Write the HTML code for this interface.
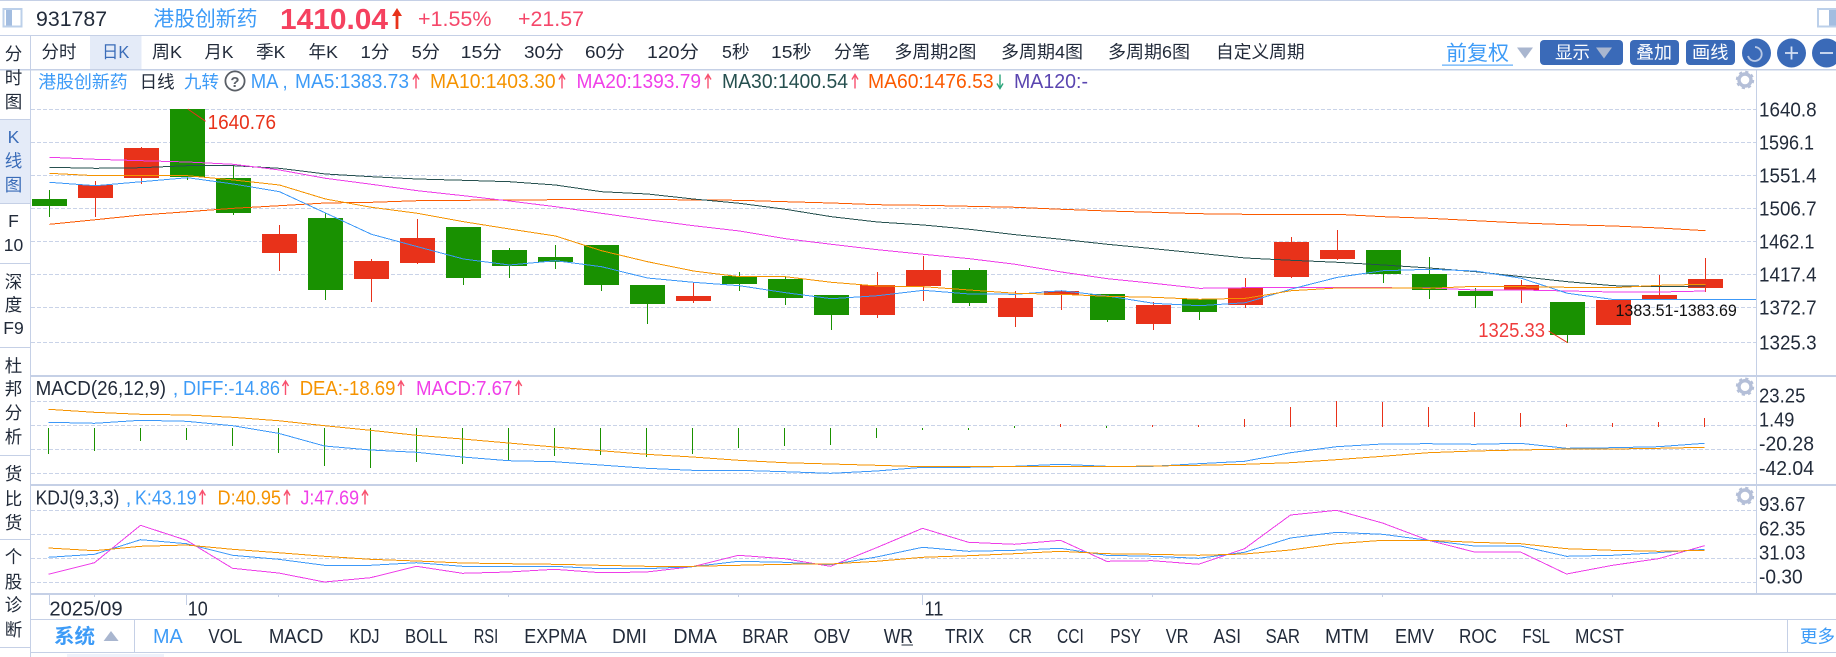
<!DOCTYPE html>
<html lang="zh"><head><meta charset="utf-8"><title>931787</title>
<style>
html,body{margin:0;padding:0;background:#fff;width:1836px;height:657px;overflow:hidden}
svg{display:block;position:absolute;left:0;top:0}
text{font-family:"Liberation Sans","Noto Sans CJK SC",sans-serif;font-size:20px;fill:#222b3a;white-space:pre}
.t{font-size:17.5px}
.s{font-size:17.5px;text-anchor:middle}
.bl{fill:#3d9bf7}.or{fill:#f59300}.mg{fill:#f03fe8}
.ln{fill:none;stroke-width:1;shape-rendering:crispEdges}
.fr{shape-rendering:crispEdges}
</style></head><body>
<svg width="1836" height="657" viewBox="0 0 1836 657" xmlns="http://www.w3.org/2000/svg">
<rect width="1836" height="657" fill="#fff"/>
<!-- structural -->
<rect x="90" y="36" width="51.5" height="33" fill="#e4ebf8"/>
<rect x="0" y="119" width="30" height="84" fill="#e4ebf8"/>
<g fill="#c5d0e6" class="fr">
<rect x="0" y="0" width="1836" height="1"/>
<rect x="0" y="35" width="1836" height="1"/>
<rect x="0" y="69" width="1836" height="1.5"/>
<rect x="30" y="36" width="1" height="621"/>
<rect x="1756" y="70" width="1" height="525"/>
<rect x="31" y="375" width="1805" height="2"/>
<rect x="31" y="484" width="1805" height="2"/>
<rect x="31" y="593" width="1805" height="2"/>
<rect x="31" y="619" width="1805" height="1"/>
<rect x="31" y="652" width="1805" height="1"/>
<rect x="134" y="620" width="1" height="32"/>
<rect x="1787" y="620" width="1" height="32"/>
<rect x="0" y="119" width="30" height="1"/><rect x="0" y="203" width="30" height="1"/>
<rect x="0" y="263" width="30" height="1"/><rect x="0" y="347" width="30" height="1"/>
<rect x="0" y="455" width="30" height="1"/><rect x="0" y="539" width="30" height="1"/>
<rect x="0" y="647" width="30" height="1"/>
<rect x="49" y="595" width="1" height="10"/><rect x="186" y="595" width="1" height="10"/><rect x="922" y="595" width="1" height="10"/>
<rect x="94" y="595" width="1" height="2"/><rect x="278" y="595" width="1" height="2"/><rect x="508" y="595" width="1" height="2"/><rect x="738" y="595" width="1" height="2"/><rect x="1152" y="595" width="1" height="2"/><rect x="1382" y="595" width="1" height="2"/><rect x="1612" y="595" width="1" height="2"/>
</g>
<rect x="67" y="654" width="97" height="3" fill="#eef2fb"/>
<!-- grid -->
<path class="fr" fill="none" stroke="#c9d3e8" stroke-width="1" stroke-dasharray="4 2" d="M31 109.5H1756M31 142.5H1756M31 175.5H1756M31 208.5H1756M31 241.5H1756M31 274.5H1756M31 307.5H1756M31 342.5H1756M31 401.5H1756M31 425.5H1756M31 449.5H1756M31 473.5H1756M31 510.5H1756M31 534.5H1756M31 558.5H1756M31 582.5H1756"/>
<!-- header -->
<rect x="3.5" y="9" width="18" height="17.5" fill="#fff" stroke="#bcd0ea" stroke-width="2"/>
<rect x="6" y="10" width="6" height="15.5" fill="#a3bde0"/>
<rect x="1818" y="9" width="20" height="17.5" fill="#fff" stroke="#bcd0ea" stroke-width="2"/>
<rect x="1829" y="10" width="7" height="15.5" fill="#a3bde0"/>
<text x="36" y="26" style="font-size:21.3px">931787</text>
<text x="153.4" y="26" textLength="104" lengthAdjust="spacingAndGlyphs" class="bl" style="font-size:20.8px">港股创新药</text>
<text x="280" y="29" textLength="108" lengthAdjust="spacingAndGlyphs" style="font-size:29px;font-weight:bold;fill:#f5415f">1410.04</text>
<path d="M395.6 29V16H392L397 8L402 16H398.4V29Z" fill="#e8321a"/>
<text x="418" y="26" textLength="73.5" lengthAdjust="spacingAndGlyphs" style="font-size:21.3px;fill:#f5476a">+1.55%</text>
<text x="518" y="26" textLength="66" lengthAdjust="spacingAndGlyphs" style="font-size:21.3px;fill:#f5476a">+21.57</text>
<!-- toolbar -->
<g class="t">
<text class="t" x="41.5" y="58" textLength="35" lengthAdjust="spacingAndGlyphs">分时</text>
<text class="t" x="102" y="58" textLength="27.3" lengthAdjust="spacingAndGlyphs" style="fill:#3a6cb8">日K</text>
<text class="t" x="152" y="58" textLength="30" lengthAdjust="spacingAndGlyphs">周K</text>
<text class="t" x="204.5" y="58" textLength="29" lengthAdjust="spacingAndGlyphs">月K</text>
<text class="t" x="256" y="58" textLength="29.4" lengthAdjust="spacingAndGlyphs">季K</text>
<text class="t" x="308.5" y="58" textLength="29.5" lengthAdjust="spacingAndGlyphs">年K</text>
<text class="t" x="360.5" y="58" textLength="29" lengthAdjust="spacingAndGlyphs">1分</text>
<text class="t" x="411.6" y="58" textLength="28.4" lengthAdjust="spacingAndGlyphs">5分</text>
<text class="t" x="460.6" y="58" textLength="41.4" lengthAdjust="spacingAndGlyphs">15分</text>
<text class="t" x="524" y="58" textLength="40" lengthAdjust="spacingAndGlyphs">30分</text>
<text class="t" x="585" y="58" textLength="40" lengthAdjust="spacingAndGlyphs">60分</text>
<text class="t" x="647" y="58" textLength="52" lengthAdjust="spacingAndGlyphs">120分</text>
<text class="t" x="722" y="58" textLength="27.6" lengthAdjust="spacingAndGlyphs">5秒</text>
<text class="t" x="771" y="58" textLength="40.7" lengthAdjust="spacingAndGlyphs">15秒</text>
<text class="t" x="834" y="58" textLength="36" lengthAdjust="spacingAndGlyphs">分笔</text>
<text class="t" x="894.4" y="58" textLength="82" lengthAdjust="spacingAndGlyphs">多周期2图</text>
<text class="t" x="1001" y="58" textLength="82" lengthAdjust="spacingAndGlyphs">多周期4图</text>
<text class="t" x="1108" y="58" textLength="82" lengthAdjust="spacingAndGlyphs">多周期6图</text>
<text class="t" x="1216" y="58" textLength="88.6" lengthAdjust="spacingAndGlyphs">自定义周期</text>
</g>
<text x="1446" y="60" textLength="63" lengthAdjust="spacingAndGlyphs" class="bl" style="font-size:20.5px">前复权</text>
<rect x="1442" y="64.6" width="71" height="1" fill="#3d9bf7"/>
<path d="M1517 47.5H1533L1525 58.5Z" fill="#a9b6cf"/>
<rect x="1540" y="40" width="83" height="25" rx="4" fill="#3a6ab8"/>
<text class="t" x="1555" y="58.5" textLength="35" lengthAdjust="spacingAndGlyphs" style="fill:#fff">显示</text>
<path d="M1596 47.5H1612L1604 58.5Z" fill="#a9b6cf"/>
<rect x="1630" y="40" width="49" height="25" rx="4" fill="#3a6ab8"/>
<text class="t" x="1636" y="58.5" textLength="36" lengthAdjust="spacingAndGlyphs" style="fill:#fff">叠加</text>
<rect x="1686" y="40" width="49" height="25" rx="4" fill="#3a6ab8"/>
<text class="t" x="1692" y="58.5" textLength="36.4" lengthAdjust="spacingAndGlyphs" style="fill:#fff">画线</text>
<circle cx="1756.5" cy="53" r="14.5" fill="#3a6ab8"/>
<path d="M1755 47A7 7 0 1 1 1748 56" fill="none" stroke="#b9c9e6" stroke-width="1.8"/>
<circle cx="1791.5" cy="53" r="14.5" fill="#3a6ab8"/>
<path d="M1785 53H1798M1791.5 46.5V59.5" fill="none" stroke="#d5e0f3" stroke-width="1.8"/>
<circle cx="1826.5" cy="53" r="14.5" fill="#3a6ab8"/>
<path d="M1820 53H1833" fill="none" stroke="#d5e0f3" stroke-width="1.8"/>
<!-- sidebar -->
<text class="s" x="13.5" y="60">分</text><text class="s" x="13.5" y="84">时</text><text class="s" x="13.5" y="108">图</text>
<g style="fill:#3a6cb8"><text class="s" x="13.5" y="143" style="fill:#3a6cb8">K</text><text class="s" x="13.5" y="167" style="fill:#3a6cb8">线</text><text class="s" x="13.5" y="191" style="fill:#3a6cb8">图</text></g>
<text class="s" x="13.5" y="227">F</text><text class="s" x="13.5" y="251">10</text>
<text class="s" x="13.5" y="288">深</text><text class="s" x="13.5" y="311">度</text><text class="s" x="13.5" y="334">F9</text>
<text class="s" x="13.5" y="372">杜</text><text class="s" x="13.5" y="395">邦</text><text class="s" x="13.5" y="419">分</text><text class="s" x="13.5" y="443">析</text>
<text class="s" x="13.5" y="480">货</text><text class="s" x="13.5" y="505">比</text><text class="s" x="13.5" y="529">货</text>
<text class="s" x="13.5" y="563">个</text><text class="s" x="13.5" y="588">股</text><text class="s" x="13.5" y="611">诊</text><text class="s" x="13.5" y="636">断</text>
<!-- candles -->
<path class="fr" fill="#199101" d="M32 199h35v7h-35zM49 190h1v27h-1zM170 109h35v68h-35zM187 177h1v3h-1zM216 178h35v35h-35zM233 164h1v51h-1zM308 218h35v72h-35zM325 213h1v87h-1zM446 227h35v51h-35zM463 278h1v7h-1zM492 250h35v16h-35zM509 248h1v30h-1zM538 257h35v5h-35zM555 245h1v24h-1zM584 245h35v40h-35zM601 285h1v6h-1zM630 285h35v19h-35zM647 304h1v20h-1zM722 276h35v8h-35zM739 272h1v19h-1zM768 279h35v19h-35zM785 277h1v28h-1zM814 295h35v20h-35zM831 315h1v15h-1zM952 270h35v33h-35zM969 268h1v38h-1zM1090 294h35v26h-35zM1107 320h1v2h-1zM1182 299h35v13h-35zM1199 312h1v8h-1zM1366 250h35v24h-35zM1383 274h1v9h-1zM1412 274h35v16h-35zM1429 257h1v42h-1zM1458 291h35v5h-35zM1475 288h1v20h-1zM1550 302h35v33h-35zM1567 335h1v8h-1z"/>
<path class="fr" fill="#e8321a" d="M78 185h35v13h-35zM95 181h1v36h-1zM124 148h35v30h-35zM141 147h1v37h-1zM262 234h35v19h-35zM279 225h1v46h-1zM354 261h35v18h-35zM371 259h1v43h-1zM400 238h35v25h-35zM417 219h1v45h-1zM676 296h35v5h-35zM693 282h1v21h-1zM860 285h35v30h-35zM877 272h1v46h-1zM906 270h35v16h-35zM923 256h1v45h-1zM998 298h35v19h-35zM1015 291h1v36h-1zM1044 291h35v4h-35zM1061 291h1v19h-1zM1136 305h35v19h-35zM1153 302h1v28h-1zM1228 288h35v17h-35zM1245 278h1v30h-1zM1274 242h35v35h-35zM1291 237h1v41h-1zM1320 250h35v9h-35zM1337 230h1v30h-1zM1504 285h35v5h-35zM1521 280h1v23h-1zM1596 300h35v25h-35zM1642 295h35v4h-35zM1659 275h1v24h-1zM1688 279h35v9h-35zM1705 258h1v34h-1z"/>
<!-- MA lines -->
<polyline class="ln" stroke="#fb5a00" points="49.5,224.3 95.5,219.7 141.5,215 187.5,211.7 233.5,208.3 279.5,205.7 325.5,203 371.5,202.3 417.5,200.7 463.5,200.3 509.5,200 555.5,199.7 601.5,199.3 647.5,199.3 693.5,200 739.5,200.3 785.5,201.7 831.5,203 877.5,204.7 923.5,205.3 969.5,206.3 1015.5,207.3 1061.5,209.3 1107.5,211 1153.5,212.3 1199.5,213.7 1245.5,214.3 1291.5,214.3 1337.5,214.3 1383.5,216.7 1429.5,218.3 1475.5,220.7 1521.5,223 1567.5,224.7 1613.5,226 1659.5,228 1705.5,230.7"/>
<polyline class="ln" stroke="#26504f" points="49.5,167.3 95.5,168.3 141.5,167.7 187.5,165.7 233.5,165.7 279.5,168.3 325.5,174 371.5,176.7 417.5,179 463.5,180.3 509.5,181.7 555.5,185 601.5,191.7 647.5,194 693.5,199 739.5,203.3 785.5,209.3 831.5,216.7 877.5,222 923.5,225 969.5,229.3 1015.5,234.7 1061.5,239.3 1107.5,244.3 1153.5,248.7 1199.5,253.3 1245.5,258 1291.5,260.3 1337.5,262.3 1383.5,265 1429.5,268 1475.5,271.7 1521.5,276.7 1567.5,281.7 1613.5,285.7 1659.5,286.7 1705.5,286"/>
<polyline class="ln" stroke="#ee3de8" points="49.5,157.3 95.5,159.3 141.5,160.7 187.5,162 233.5,164.3 279.5,170 325.5,178.3 371.5,184.3 417.5,190.7 463.5,195.7 509.5,201 555.5,206.7 601.5,213.3 647.5,219.7 693.5,225.7 739.5,231 785.5,238.7 831.5,244.3 877.5,249.7 923.5,254.3 969.5,258.7 1015.5,264.3 1061.5,272 1107.5,278.7 1153.5,283.3 1199.5,288.3 1245.5,287.7 1291.5,287.7 1337.5,287.7 1383.5,287.7 1429.5,288 1475.5,290 1521.5,290 1567.5,291 1613.5,292 1659.5,292 1705.5,291"/>
<polyline class="ln" stroke="#3c98f8" points="49.5,182.3 95.5,185.7 141.5,181.7 187.5,177.7 233.5,184 279.5,191.7 325.5,213 371.5,234.3 417.5,246.7 463.5,259 509.5,265 555.5,260.7 601.5,266.7 647.5,278 693.5,282.3 739.5,285.7 785.5,292.7 831.5,298.7 877.5,295.7 923.5,290.3 969.5,294 1015.5,294.3 1061.5,290.7 1107.5,296 1153.5,303.3 1199.5,305.7 1245.5,302.7 1291.5,289 1337.5,277.3 1383.5,270.7 1429.5,269.3 1475.5,271 1521.5,278.3 1567.5,293.3 1613.5,299.5 1756,299.5"/>
<polyline class="ln" stroke="#f59300" points="49.5,173.3 95.5,175.7 141.5,175.7 187.5,175.7 233.5,180 279.5,185 325.5,199 371.5,207.3 417.5,213.3 463.5,221.7 509.5,229 555.5,236 601.5,250.7 647.5,261.7 693.5,271 739.5,276.7 785.5,276.7 831.5,282.3 877.5,286 923.5,286.7 969.5,290 1015.5,293.3 1061.5,294.3 1107.5,296.3 1153.5,297.3 1199.5,299.3 1245.5,298.3 1291.5,290.7 1337.5,288 1383.5,288 1429.5,288.3 1475.5,286.3 1521.5,286.7 1567.5,287.3 1613.5,287.7 1659.5,285.3 1705.5,284.3"/>
<!-- extremes -->
<path d="M187.8 109L205.6 121.3M1548.6 331L1567.6 342.7" fill="none" stroke="#e8321a" stroke-width="1"/>
<text x="207.6" y="129" textLength="68.4" lengthAdjust="spacingAndGlyphs" style="fill:#e8321a">1640.76</text>
<text x="1478.3" y="337" textLength="66.7" lengthAdjust="spacingAndGlyphs" style="fill:#ef3c3c">1325.33</text>
<text x="1615.5" y="316" textLength="121.3" lengthAdjust="spacingAndGlyphs" style="font-size:17px;fill:#111">1383.51-1383.69</text>
<!-- legend -->
<text x="38.3" y="88" textLength="89.4" lengthAdjust="spacingAndGlyphs" class="bl" style="font-size:17.8px">港股创新药</text>
<text x="139.6" y="88" textLength="35" lengthAdjust="spacingAndGlyphs" style="font-size:17.5px">日线</text>
<text x="184" y="88" textLength="35" lengthAdjust="spacingAndGlyphs" class="bl" style="font-size:17.5px">九转</text>
<circle cx="235" cy="81" r="9.6" fill="#fff" stroke="#5a5f66" stroke-width="1.8"/>
<text x="235" y="87" style="font-size:15px;font-weight:bold;fill:#5a5f66;text-anchor:middle">?</text>
<text x="250.7" y="88" textLength="37" lengthAdjust="spacingAndGlyphs" class="bl">MA ,</text>
<text x="295" y="88" textLength="114" lengthAdjust="spacingAndGlyphs" class="bl">MA5:1383.73</text>
<text x="430" y="88" textLength="125.6" lengthAdjust="spacingAndGlyphs" class="or">MA10:1403.30</text>
<text x="576.5" y="88" textLength="124.5" lengthAdjust="spacingAndGlyphs" class="mg">MA20:1393.79</text>
<text x="722" y="88" textLength="126" lengthAdjust="spacingAndGlyphs" style="fill:#26504f">MA30:1400.54</text>
<text x="868" y="88" textLength="125.6" lengthAdjust="spacingAndGlyphs" style="fill:#fb5a00">MA60:1476.53</text>
<text x="1014" y="88" textLength="74" lengthAdjust="spacingAndGlyphs" style="fill:#5a45b0">MA120:-</text>
<path d="M416 88.5V75M413 79.5L416 74.5L419 79.5M562 88.5V75M559 79.5L562 74.5L565 79.5M708 88.5V75M705 79.5L708 74.5L711 79.5M855 88.5V75M852 79.5L855 74.5L858 79.5M285.5 395V381.5M282.5 386L285.5 381L288.5 386M401 395V381.5M398 386L401 381L404 386M518.7 395V381.5M515.7 386L518.7 381L521.7 386M202.4 504.5V491M199.4 495.5L202.4 490.5L205.4 495.5M287 504.5V491M284 495.5L287 490.5L290 495.5M365 504.5V491M362 495.5L365 490.5L368 495.5" fill="none" stroke="#f8506e" stroke-width="1.4"/>
<path d="M1000 74.5V88M997 83.5L1000 88.5L1003 83.5" fill="none" stroke="#2aa57a" stroke-width="1.4"/>
<!-- gears -->
<g fill="none" stroke="#b4bfd8">
<circle cx="1745" cy="80" r="6" stroke-width="3.4"/><circle cx="1745" cy="80" r="8.2" stroke-width="2" stroke-dasharray="3.2 3.24"/>
<circle cx="1745" cy="386.7" r="6" stroke-width="3.4"/><circle cx="1745" cy="386.7" r="8.2" stroke-width="2" stroke-dasharray="3.2 3.24"/>
<circle cx="1745" cy="496" r="6" stroke-width="3.4"/><circle cx="1745" cy="496" r="8.2" stroke-width="2" stroke-dasharray="3.2 3.24"/>
</g>
<!-- axis labels -->
<text x="1759" y="116.5" textLength="57.6" lengthAdjust="spacingAndGlyphs">1640.8</text><text x="1759" y="149.5" textLength="55" lengthAdjust="spacingAndGlyphs">1596.1</text><text x="1759" y="182.5" textLength="57.6" lengthAdjust="spacingAndGlyphs">1551.4</text><text x="1759" y="215.5" textLength="57.6" lengthAdjust="spacingAndGlyphs">1506.7</text><text x="1759" y="248.5" textLength="55.5" lengthAdjust="spacingAndGlyphs">1462.1</text><text x="1759" y="281.5" textLength="57.6" lengthAdjust="spacingAndGlyphs">1417.4</text><text x="1759" y="314.5" textLength="57.6" lengthAdjust="spacingAndGlyphs">1372.7</text><text x="1759" y="349.5" textLength="57.6" lengthAdjust="spacingAndGlyphs">1325.3</text>
<text x="1759" y="402.5" textLength="46.4" lengthAdjust="spacingAndGlyphs">23.25</text><text x="1759" y="426.5" textLength="35.3" lengthAdjust="spacingAndGlyphs">1.49</text><text x="1759" y="450.5" textLength="55" lengthAdjust="spacingAndGlyphs">-20.28</text><text x="1759" y="475" textLength="55" lengthAdjust="spacingAndGlyphs">-42.04</text>
<text x="1759" y="511" textLength="46.4" lengthAdjust="spacingAndGlyphs">93.67</text><text x="1759" y="535.5" textLength="46.4" lengthAdjust="spacingAndGlyphs">62.35</text><text x="1759" y="559.5" textLength="46.4" lengthAdjust="spacingAndGlyphs">31.03</text><text x="1759" y="583.5" textLength="43.7" lengthAdjust="spacingAndGlyphs">-0.30</text>
<!-- MACD -->
<text x="35.6" y="395" textLength="130.4" lengthAdjust="spacingAndGlyphs">MACD(26,12,9)</text>
<text x="172.8" y="395" class="bl">,</text>
<text x="183" y="395" textLength="97" lengthAdjust="spacingAndGlyphs" class="bl">DIFF:-14.86</text>
<text x="299.7" y="395" textLength="95.7" lengthAdjust="spacingAndGlyphs" class="or">DEA:-18.69</text>
<text x="416" y="395" textLength="96.4" lengthAdjust="spacingAndGlyphs" class="mg">MACD:7.67</text>
<path class="ln" stroke="#1a9100" d="M48.5 428V454M94.5 428V451M140.5 428V441M186.5 428V440M232.5 428V446M278.5 428V453M324.5 428V466M370.5 428V468M416.5 428V462M462.5 428V464M508.5 428V460M554.5 428V456M600.5 428V455M646.5 428V457M692.5 428V454M738.5 428V448M784.5 428V446M830.5 428V445M876.5 428V438M922.5 428V430M968.5 428V430M1014.5 426V428M1106.5 426V428"/>
<path class="ln" stroke="#e8321a" d="M1060.5 424V427M1152.5 425V427M1198.5 425V427M1244.5 419V427M1290.5 407V427M1336.5 401V427M1382.5 402V427M1428.5 407V427M1474.5 412V427M1520.5 413V427M1566.5 424V427M1612.5 423V427M1658.5 422V427M1704.5 418V427"/>
<polyline class="ln" stroke="#3c98f8" points="48.5,422.3 94.5,423.3 140.5,420.3 186.5,421.3 232.5,425.7 278.5,433.3 324.5,446 370.5,450 416.5,452.3 462.5,457 508.5,460.7 554.5,461.7 600.5,465 646.5,468.3 692.5,470.3 738.5,470.3 784.5,471.7 830.5,473.3 876.5,471 922.5,467.3 968.5,467.3 1014.5,466.3 1060.5,464.3 1106.5,466.3 1152.5,466.3 1198.5,463.7 1244.5,461.3 1290.5,452.7 1336.5,446.7 1382.5,444 1428.5,443.7 1474.5,444.3 1520.5,443.3 1566.5,448.3 1612.5,447.7 1658.5,446.7 1704.5,443.3"/>
<polyline class="ln" stroke="#f59300" points="48.5,409.3 94.5,412.3 140.5,414.3 186.5,415 232.5,417.3 278.5,420.7 324.5,425.7 370.5,430.3 416.5,435.3 462.5,439 508.5,443 554.5,447 600.5,450.7 646.5,454.3 692.5,457 738.5,460.3 784.5,462.7 830.5,464 876.5,465.3 922.5,466.7 968.5,466.7 1014.5,466.7 1060.5,466.7 1106.5,466.7 1152.5,466 1198.5,465.3 1244.5,464.3 1290.5,462.7 1336.5,459.7 1382.5,456.3 1428.5,452.7 1474.5,451 1520.5,450 1566.5,449 1612.5,449 1658.5,448.3 1704.5,447.3"/>
<!-- KDJ -->
<text x="35.6" y="504.5" textLength="83.8" lengthAdjust="spacingAndGlyphs">KDJ(9,3,3)</text>
<text x="125.7" y="504.5" class="bl">,</text>
<text x="135" y="504.5" textLength="61.5" lengthAdjust="spacingAndGlyphs" class="bl">K:43.19</text>
<text x="217.5" y="504.5" textLength="63.5" lengthAdjust="spacingAndGlyphs" class="or">D:40.95</text>
<text x="300.5" y="504.5" textLength="58.5" lengthAdjust="spacingAndGlyphs" class="mg">J:47.69</text>
<polyline class="ln" stroke="#ee3de8" points="48.5,574.3 94.5,562.7 140.5,525.3 186.5,540.3 232.5,568.3 278.5,573 324.5,582 370.5,577.7 416.5,566.3 462.5,573.3 508.5,572 554.5,569.3 600.5,572.7 646.5,572 692.5,566.7 738.5,555.3 784.5,558.7 830.5,566.3 876.5,547.7 922.5,528.3 968.5,542.3 1014.5,544.3 1060.5,540.3 1106.5,561.3 1152.5,560.7 1198.5,564.3 1244.5,548.7 1290.5,515 1336.5,510.3 1382.5,523 1428.5,540.3 1474.5,552 1520.5,552 1566.5,574 1612.5,565.3 1658.5,558.7 1704.5,545.7"/>
<polyline class="ln" stroke="#3c98f8" points="48.5,557.3 94.5,554.3 140.5,539.7 186.5,543.7 232.5,555.3 278.5,559.3 324.5,565.3 370.5,565.3 416.5,562.7 462.5,566.3 508.5,566.3 554.5,566.3 600.5,568.7 646.5,568.7 692.5,566.7 738.5,561.3 784.5,562.3 830.5,564.7 876.5,557 922.5,547.3 968.5,551.3 1014.5,550.3 1060.5,548.3 1106.5,555.3 1152.5,556.3 1198.5,558.3 1244.5,552.3 1290.5,538 1336.5,532.3 1382.5,534.3 1428.5,540.3 1474.5,546 1520.5,546 1566.5,556.3 1612.5,555.3 1658.5,552.7 1704.5,549.3"/>
<polyline class="ln" stroke="#f59300" points="48.5,548 94.5,550.7 140.5,546.3 186.5,545 232.5,549.3 278.5,552.7 324.5,556.3 370.5,559.3 416.5,561 462.5,563 508.5,563.7 554.5,564.3 600.5,565.3 646.5,566.3 692.5,566.3 738.5,565.3 784.5,564.3 830.5,564 876.5,561.3 922.5,557.3 968.5,555.7 1014.5,553.7 1060.5,551.3 1106.5,553.7 1152.5,554.3 1198.5,555.3 1244.5,554 1290.5,550 1336.5,543.7 1382.5,540.3 1428.5,540.3 1474.5,542.3 1520.5,543.7 1566.5,548.7 1612.5,550.3 1658.5,551.3 1704.5,550.3"/>
<!-- x axis labels -->
<text x="49.4" y="615.5" textLength="73.2" lengthAdjust="spacingAndGlyphs">2025/09</text>
<text x="187.8" y="615.5" textLength="20" lengthAdjust="spacingAndGlyphs">10</text>
<text x="924.4" y="615.5" textLength="19" lengthAdjust="spacingAndGlyphs">11</text>
<!-- bottom bar -->
<text x="54" y="643" textLength="41" lengthAdjust="spacingAndGlyphs" class="bl" style="font-size:20px;font-weight:bold">系统</text>
<path d="M103.6 641L111 631L118.6 641Z" fill="#a9b6cf"/>
<g>
<text x="153" y="643" textLength="29.7" lengthAdjust="spacingAndGlyphs" class="bl">MA</text>
<text x="208.4" y="643" textLength="34" lengthAdjust="spacingAndGlyphs">VOL</text>
<text x="268.9" y="643" textLength="54.5" lengthAdjust="spacingAndGlyphs">MACD</text>
<text x="349.5" y="643" textLength="30" lengthAdjust="spacingAndGlyphs">KDJ</text>
<text x="405" y="643" textLength="42.6" lengthAdjust="spacingAndGlyphs">BOLL</text>
<text x="473.7" y="643" textLength="24.5" lengthAdjust="spacingAndGlyphs">RSI</text>
<text x="524.3" y="643" textLength="62.5" lengthAdjust="spacingAndGlyphs">EXPMA</text>
<text x="612" y="643" textLength="34.9" lengthAdjust="spacingAndGlyphs">DMI</text>
<text x="673.4" y="643" textLength="43.5" lengthAdjust="spacingAndGlyphs">DMA</text>
<text x="742.2" y="643" textLength="46.6" lengthAdjust="spacingAndGlyphs">BRAR</text>
<text x="813.7" y="643" textLength="36.3" lengthAdjust="spacingAndGlyphs">OBV</text>
<text x="883.7" y="643" textLength="29.3" lengthAdjust="spacingAndGlyphs">WR</text>
<rect x="901.5" y="644.5" width="11.5" height="1" fill="#222b3a"/>
<text x="945" y="643" textLength="39" lengthAdjust="spacingAndGlyphs">TRIX</text>
<text x="1008.7" y="643" textLength="23.3" lengthAdjust="spacingAndGlyphs">CR</text>
<text x="1057" y="643" textLength="26.8" lengthAdjust="spacingAndGlyphs">CCI</text>
<text x="1110.3" y="643" textLength="30.7" lengthAdjust="spacingAndGlyphs">PSY</text>
<text x="1165.7" y="643" textLength="22.9" lengthAdjust="spacingAndGlyphs">VR</text>
<text x="1213.5" y="643" textLength="27.5" lengthAdjust="spacingAndGlyphs">ASI</text>
<text x="1265.5" y="643" textLength="34.5" lengthAdjust="spacingAndGlyphs">SAR</text>
<text x="1325" y="643" textLength="44" lengthAdjust="spacingAndGlyphs">MTM</text>
<text x="1395" y="643" textLength="39" lengthAdjust="spacingAndGlyphs">EMV</text>
<text x="1459" y="643" textLength="38" lengthAdjust="spacingAndGlyphs">ROC</text>
<text x="1522.4" y="643" textLength="27.6" lengthAdjust="spacingAndGlyphs">FSL</text>
<text x="1575" y="643" textLength="49" lengthAdjust="spacingAndGlyphs">MCST</text>
</g>
<text x="1800" y="642.5" class="bl" style="font-size:17.5px">更多</text>
</svg>
</body></html>
